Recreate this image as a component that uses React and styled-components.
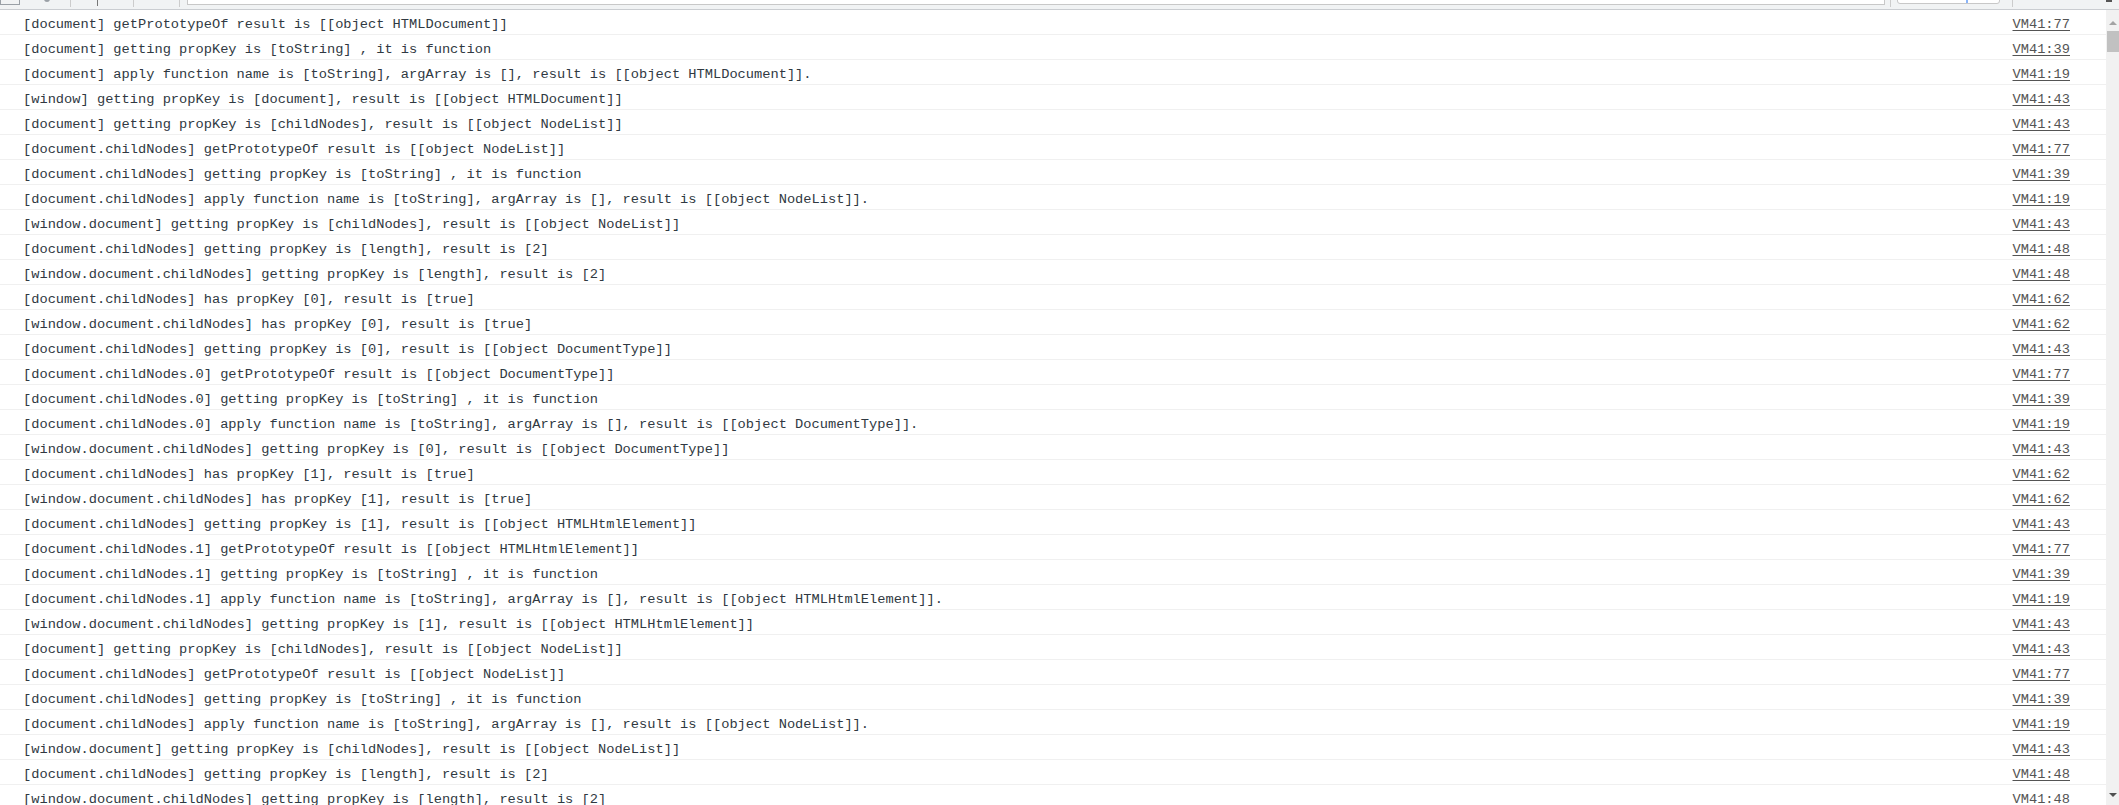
import React from "react";
import styled, { createGlobalStyle } from "styled-components";

const Global = createGlobalStyle`
  html, body { margin: 0; padding: 0; background: #fff; overflow: hidden; }
  #root { width: 2119px; height: 805px; }
`;

const rows = [
  ["[document] getPrototypeOf result is [[object HTMLDocument]]", "VM41:77"],
  ["[document] getting propKey is [toString] , it is function", "VM41:39"],
  ["[document] apply function name is [toString], argArray is [], result is [[object HTMLDocument]].", "VM41:19"],
  ["[window] getting propKey is [document], result is [[object HTMLDocument]]", "VM41:43"],
  ["[document] getting propKey is [childNodes], result is [[object NodeList]]", "VM41:43"],
  ["[document.childNodes] getPrototypeOf result is [[object NodeList]]", "VM41:77"],
  ["[document.childNodes] getting propKey is [toString] , it is function", "VM41:39"],
  ["[document.childNodes] apply function name is [toString], argArray is [], result is [[object NodeList]].", "VM41:19"],
  ["[window.document] getting propKey is [childNodes], result is [[object NodeList]]", "VM41:43"],
  ["[document.childNodes] getting propKey is [length], result is [2]", "VM41:48"],
  ["[window.document.childNodes] getting propKey is [length], result is [2]", "VM41:48"],
  ["[document.childNodes] has propKey [0], result is [true]", "VM41:62"],
  ["[window.document.childNodes] has propKey [0], result is [true]", "VM41:62"],
  ["[document.childNodes] getting propKey is [0], result is [[object DocumentType]]", "VM41:43"],
  ["[document.childNodes.0] getPrototypeOf result is [[object DocumentType]]", "VM41:77"],
  ["[document.childNodes.0] getting propKey is [toString] , it is function", "VM41:39"],
  ["[document.childNodes.0] apply function name is [toString], argArray is [], result is [[object DocumentType]].", "VM41:19"],
  ["[window.document.childNodes] getting propKey is [0], result is [[object DocumentType]]", "VM41:43"],
  ["[document.childNodes] has propKey [1], result is [true]", "VM41:62"],
  ["[window.document.childNodes] has propKey [1], result is [true]", "VM41:62"],
  ["[document.childNodes] getting propKey is [1], result is [[object HTMLHtmlElement]]", "VM41:43"],
  ["[document.childNodes.1] getPrototypeOf result is [[object HTMLHtmlElement]]", "VM41:77"],
  ["[document.childNodes.1] getting propKey is [toString] , it is function", "VM41:39"],
  ["[document.childNodes.1] apply function name is [toString], argArray is [], result is [[object HTMLHtmlElement]].", "VM41:19"],
  ["[window.document.childNodes] getting propKey is [1], result is [[object HTMLHtmlElement]]", "VM41:43"],
  ["[document] getting propKey is [childNodes], result is [[object NodeList]]", "VM41:43"],
  ["[document.childNodes] getPrototypeOf result is [[object NodeList]]", "VM41:77"],
  ["[document.childNodes] getting propKey is [toString] , it is function", "VM41:39"],
  ["[document.childNodes] apply function name is [toString], argArray is [], result is [[object NodeList]].", "VM41:19"],
  ["[window.document] getting propKey is [childNodes], result is [[object NodeList]]", "VM41:43"],
  ["[document.childNodes] getting propKey is [length], result is [2]", "VM41:48"],
  ["[window.document.childNodes] getting propKey is [length], result is [2]", "VM41:48"],
];

const Page = styled.div`
  display: flex;
  flex-direction: column;
  width: 2119px;
  height: 805px;
  overflow: hidden;
`;

const Toolbar = styled.div`
  flex: 0 0 9px;
  display: flex;
  align-items: flex-end;
  background: #f1f3f4;
  border-bottom: 1px solid #cacdd1;
  overflow: hidden;
`;

const ToolIcon = styled.div`
  flex: 0 0 ${(p) => p.$w}px;
  height: 14px;
  margin-left: ${(p) => p.$ml || 0}px;
  margin-bottom: ${(p) => p.$mb || 4}px;
  background: ${(p) => p.$bg || "transparent"};
  border: ${(p) => (p.$border ? "1px solid #9aa0a6" : "none")};
  border-radius: ${(p) => p.$r || 0}px;
  box-sizing: border-box;
`;

const Sep = styled.div`
  flex: 0 0 1px;
  height: ${(p) => p.$h || 14}px;
  margin-left: ${(p) => p.$ml}px;
  margin-bottom: ${(p) => p.$mb || 2}px;
  background: ${(p) => p.$c || "#ccc"};
`;

const Input = styled.div`
  flex: 0 0 ${(p) => p.$w}px;
  height: 20px;
  margin-left: ${(p) => p.$ml}px;
  margin-bottom: ${(p) => p.$mb}px;
  background: #fff;
  border: 1px solid #c8c8c8;
  border-radius: ${(p) => p.$r || 0}px;
  box-sizing: border-box;
  position: relative;
`;

const BlueTick = styled.span`
  position: absolute;
  left: 68px;
  bottom: 0;
  width: 2px;
  height: 3px;
  background: #8ab4f8;
`;

const Main = styled.div`
  flex: 1;
  display: flex;
  min-height: 0;
`;

const List = styled.div`
  flex: 1;
  overflow: hidden;
`;

const Row = styled.div`
  display: flex;
  justify-content: space-between;
  align-items: flex-start;
  box-sizing: border-box;
  height: 25px;
  padding: 6px 36px 0 23px;
  line-height: 18px;
  border-bottom: 1px solid #f0f0f0;
  font-family: "Liberation Mono", "DejaVu Sans Mono", monospace;
  font-size: 13.7px;
  color: #303942;
  white-space: pre;
`;

const Msg = styled.span``;

const Link = styled.span`
  color: #545454;
  text-decoration: underline;
  text-underline-offset: 2px;
`;

const Scrollbar = styled.div`
  flex: 0 0 13px;
  display: flex;
  flex-direction: column;
  align-items: center;
  background: #f1f1f1;
`;

const Arrow = styled.div`
  width: 0;
  height: 0;
  border-left: 4px solid transparent;
  border-right: 4px solid transparent;
  ${(p) =>
    p.$down
      ? "border-top: 4px solid #505050; margin-top: auto; margin-bottom: 8px;"
      : "border-bottom: 4px solid #a3a3a3; margin-top: 11px;"}
`;

const Thumb = styled.div`
  width: 12px;
  margin-left: 1px;
  height: 21px;
  margin-top: 6px;
  background: #c1c1c1;
`;

export default function App() {
  return (
    <Page>
      <Global />
      <Toolbar>
        <ToolIcon $w={20} $mb={4} $border />
        <ToolIcon $w={6} $ml={24} $mb={7} $bg="#9aa0a6" $r={3} />
        <Sep $ml={20} />
        <Sep $ml={26} $h={12} $mb={3} $c="#777" />
        <Sep $ml={35} />
        <Sep $ml={45} />
        <Input $w={1698} $ml={7} $mb={4} />
        <Sep $ml={5} />
        <Input $w={103} $ml={6} $mb={5} $r={3}>
          <BlueTick />
        </Input>
        <Sep $ml={12} />
        <ToolIcon $w={6} $ml={93} $mb={7} $bg="#555" />
      </Toolbar>
      <Main>
        <List>
          {rows.map(([m, l], i) => (
            <Row key={i}>
              <Msg>{m}</Msg>
              <Link>{l}</Link>
            </Row>
          ))}
        </List>
        <Scrollbar>
          <Arrow />
          <Thumb />
          <Arrow $down />
        </Scrollbar>
      </Main>
    </Page>
  );
}
